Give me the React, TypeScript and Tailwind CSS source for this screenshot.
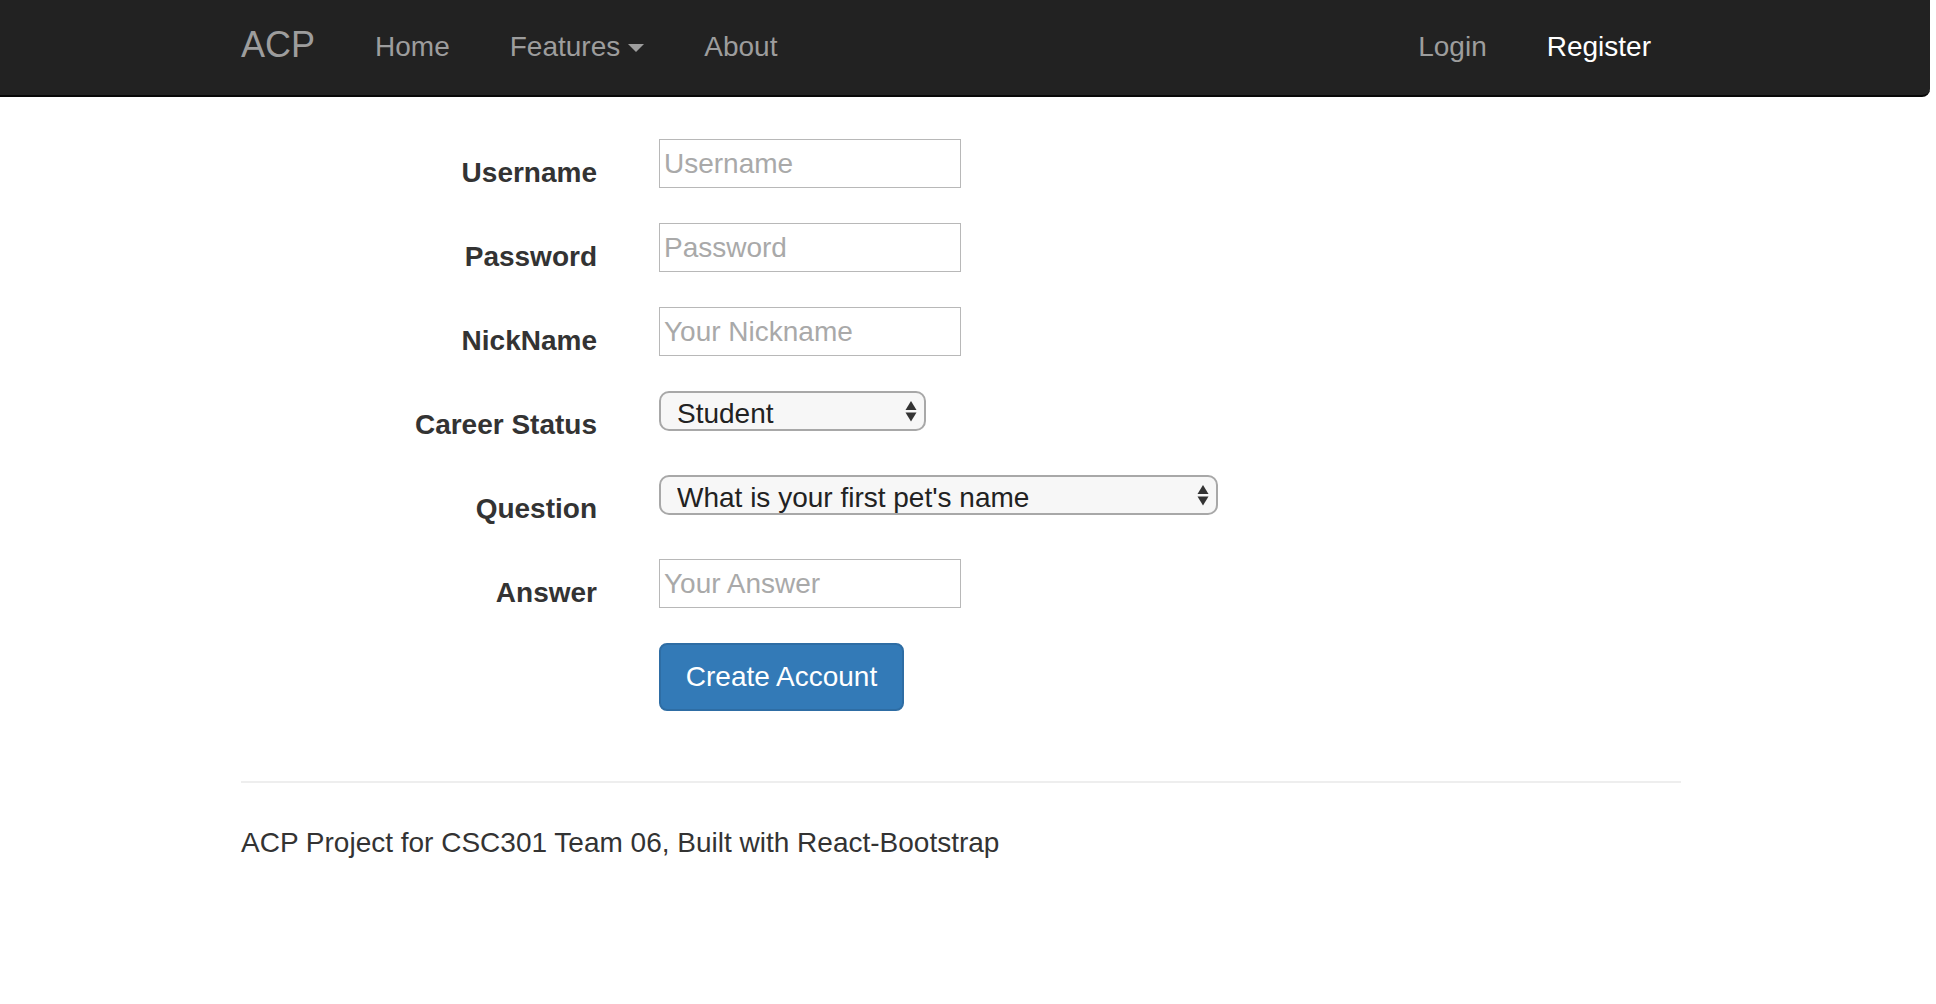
import React from "react";

const Arrows: React.FC = () => (
  <svg
    className="pointer-events-none absolute right-[8px] top-[9px]"
    width="14"
    height="22"
    viewBox="0 0 14 22"
  >
    <polygon points="7,1 12.5,10 1.5,10" fill="#333" />
    <polygon points="1.5,12.5 12.5,12.5 7,21.5" fill="#333" />
  </svg>
);

const Label: React.FC<{ text?: string }> = ({ text }) => (
  <label className="w-[356px] shrink-0 pt-[14px] text-right text-[28px] font-bold leading-[40px] text-[#333]">
    {text}
  </label>
);

const TextRow: React.FC<{ label: string; placeholder: string; type?: string }> = ({
  label,
  placeholder,
  type = "text",
}) => (
  <div className="mb-[30px] flex">
    <Label text={label} />
    <div className="ml-[62px]">
      <input
        type={type}
        placeholder={placeholder}
        className="h-[49px] w-[302px] border border-[#b8b8b8] bg-white px-[4px] text-[28px] text-[#333] outline-none placeholder:text-[#a9a9a9]"
      />
    </div>
  </div>
);

const App: React.FC = () => {
  return (
    <div className="min-h-screen w-full bg-white font-['Liberation_Sans',Arial,sans-serif] text-[#333]">
      <nav className="h-[97px] w-[1930px] rounded-br-[8px] border-b-2 border-[#080808] bg-[#222]">
        <div className="w-[1922px]">
          <div className="mx-auto flex h-[94px] w-[1500px] items-center px-[30px]">
            <a href="#" className="mb-[4px] pr-[30px] text-[36px] leading-[40px] text-[#9d9d9d]">
              ACP
            </a>
            <ul className="flex items-center text-[28px] leading-[40px] text-[#9d9d9d]">
              <li className="px-[30px]">Home</li>
              <li className="flex items-center px-[30px]">
                Features
                <span className="ml-[8px] mt-[2px] inline-block h-0 w-0 border-x-[8px] border-t-[8px] border-x-transparent border-t-[#9d9d9d]" />
              </li>
              <li className="px-[30px]">About</li>
            </ul>
            <ul className="ml-auto flex items-center text-[28px] leading-[40px]">
              <li className="px-[30px] text-[#9d9d9d]">Login</li>
              <li className="px-[30px] text-white">Register</li>
            </ul>
          </div>
        </div>
      </nav>

      <div className="w-[1922px]">
        <div className="mx-auto w-[1500px] px-[30px] pt-[42px]">
          <form onSubmit={(e) => e.preventDefault()} className="pb-px">
            <TextRow label="Username" placeholder="Username" />
            <TextRow label="Password" placeholder="Password" type="password" />
            <TextRow label="NickName" placeholder="Your Nickname" />

            <div className="mb-[30px] flex">
              <Label text="Career Status" />
              <div className="relative ml-[62px] h-[40px] w-[267px]">
                <select className="h-full w-full appearance-none rounded-[10px] border-2 border-[#a8a8a8] bg-[#f7f7f7] pl-[16px] text-[28px] text-[#222] outline-none">
                  <option>Student</option>
                  <option>Professional</option>
                </select>
                <Arrows />
              </div>
            </div>

            <div className="mb-[30px] flex">
              <Label text="Question" />
              <div className="relative ml-[62px] h-[40px] w-[559px]">
                <select className="h-full w-full appearance-none rounded-[10px] border-2 border-[#a8a8a8] bg-[#f7f7f7] pl-[16px] text-[28px] text-[#222] outline-none">
                  <option>What is your first pet's name</option>
                  <option>What city were you born in</option>
                </select>
                <Arrows />
              </div>
            </div>

            <TextRow label="Answer" placeholder="Your Answer" />

            <div className="mb-[30px] flex">
              <div className="w-[356px] shrink-0" />
              <div className="ml-[62px]">
                <button
                  type="submit"
                  className="h-[68px] w-[245px] rounded-[8px] border-2 border-[#2e6da4] bg-[#337ab7] text-center text-[28px] leading-[40px] text-white"
                >
                  Create Account
                </button>
              </div>
            </div>
          </form>

          <hr className="mt-[39px] border-t-2 border-[#eee]" />

          <footer className="mt-[40px]">
            <p className="text-[28px] leading-[40px] text-[#333]">
              ACP Project for CSC301 Team 06, Built with React-Bootstrap
            </p>
          </footer>
        </div>
      </div>
    </div>
  );
};

export default App;
